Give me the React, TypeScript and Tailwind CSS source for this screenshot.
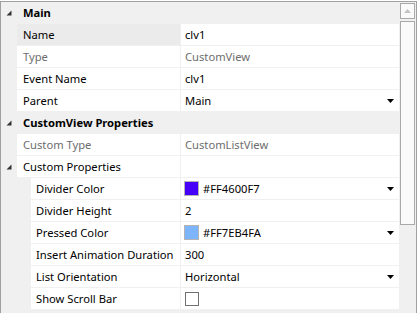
import React from "react";

const FONT = { fontFamily: '"Noto Sans", "Open Sans", sans-serif' };

function Tri() {
  return (
    <svg width="6" height="6" viewBox="0 0 6 6" className="block">
      <polygon points="5.5,0.5 5.5,5.5 0.5,5.5" fill="#333333" />
    </svg>
  );
}

function Drop() {
  return (
    <svg width="7" height="4" viewBox="0 0 7 4" className="block">
      <polygon points="0,0 7,0 3.5,4" fill="#000000" />
    </svg>
  );
}

function Category({ label }: { label: string }) {
  return (
    <div className="flex h-[22px] items-center bg-[#f0f0f0]">
      <div className="flex w-[16px] justify-end pr-[5px]">
        <Tri />
      </div>
      <div className="pl-[6px] pt-px text-[11.2px] font-bold text-black">{label}</div>
    </div>
  );
}

type RowProps = {
  label: string;
  value?: React.ReactNode;
  disabled?: boolean;
  nested?: boolean;
  selected?: boolean;
  dropdown?: boolean;
  expander?: boolean;
};

function Row({ label, value, disabled, nested, selected, dropdown, expander }: RowProps) {
  const textColor = disabled ? "text-[#6d6d6d]" : "text-black";
  return (
    <div className="flex h-[22px]">
      <div className={`${nested ? "w-[30px]" : "w-[16px]"} flex items-center justify-end pr-[5px] bg-[#f0f0f0]`}>
        {expander ? <Tri /> : null}
      </div>
      <div className="flex flex-1 border-b border-[#f0f0f0]">
        <div
          className={`${nested ? "w-[149px] pl-[5px]" : "w-[163px] pl-[6px]"} flex items-center pt-px ${
            selected ? "bg-[#ebebeb]" : "bg-white"
          } ${textColor} text-[11.2px] whitespace-nowrap`}
        >
          {label}
        </div>
        <div className="w-px bg-[#f0f0f0]" />
        <div className={`flex flex-1 items-center bg-white pl-[4px] pr-[5px] pt-px ${textColor} text-[11.2px] whitespace-nowrap`}>
          <div className="flex flex-1 items-center">{value}</div>
          {dropdown ? <Drop /> : null}
        </div>
      </div>
    </div>
  );
}

function Swatch({ color, text }: { color: string; text: string }) {
  return (
    <div className="flex items-center -ml-px">
      <div className="h-[15px] w-[15px] border border-[#b4b4b4]">
        <div className="h-full w-full" style={{ backgroundColor: color }} />
      </div>
      <span className="ml-[4px]">{text}</span>
    </div>
  );
}

export default function App() {
  return (
    <div className="h-[313px] w-[420px] overflow-hidden bg-white pt-px" style={FONT}>
      <div className="flex h-[312px] w-[417px] border-l border-r border-t border-[#a0a0a0] bg-[#f0f0f0]">
        <div className="flex w-[398px] flex-col">
          <Category label="Main" />
          <Row label="Name" value="clv1" selected />
          <Row label="Type" value="CustomView" disabled />
          <Row label="Event Name" value="clv1" />
          <Row label="Parent" value="Main" dropdown />
          <Category label="CustomView Properties" />
          <Row label="Custom Type" value="CustomListView" disabled />
          <Row label="Custom Properties" expander />
          <Row label="Divider Color" nested dropdown value={<Swatch color="#4600F7" text="#FF4600F7" />} />
          <Row label="Divider Height" nested value="2" />
          <Row label="Pressed Color" nested dropdown value={<Swatch color="#7EB4FA" text="#FF7EB4FA" />} />
          <Row label="Insert Animation Duration" nested value="300" />
          <Row label="List Orientation" nested value="Horizontal" dropdown />
          <Row
            label="Show Scroll Bar"
            nested
            value={<div className="h-[14px] w-[14px] border border-[#707070] bg-white" />}
          />
        </div>
        <div className="flex w-[17px] flex-col items-center pt-[1px]">
          <div className="flex h-[16px] w-[15px] items-center justify-center border border-[#a9a9a9] bg-[#fafafa]">
            <svg width="7" height="4" viewBox="0 0 7 4" className="block">
              <polygon points="0,4 7,4 3.5,0" fill="#c2c2c2" />
            </svg>
          </div>
          <div className="mt-[2px] h-[204px] w-[15px] border border-[#a9a9a9] bg-[#fafafa]" />
        </div>
      </div>
    </div>
  );
}
